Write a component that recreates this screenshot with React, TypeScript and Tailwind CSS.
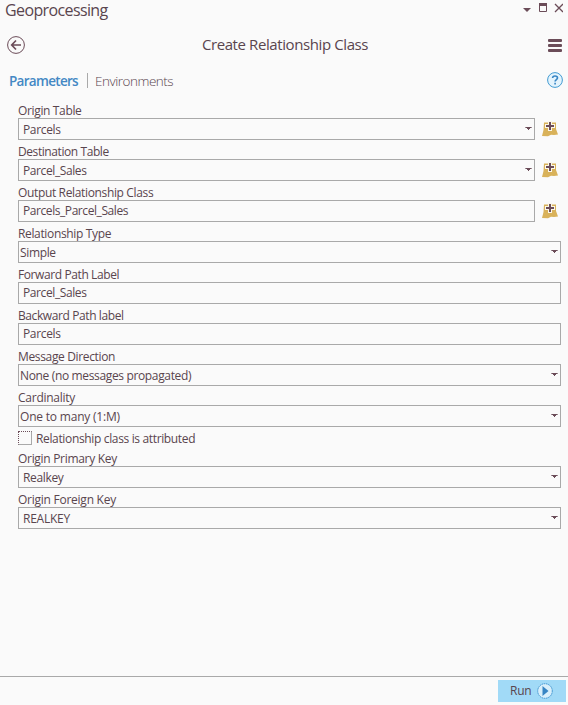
import React from "react";
import clsx from "clsx";

type FieldProps = {
  label: string;
  value: string;
  labelFit?: string;
  valueFit?: string;
  inset?: boolean;
  select?: boolean;
  browse?: boolean;
};

function Caret() {
  return (
    <svg width="7" height="4" viewBox="0 0 7 4" shapeRendering="crispEdges" className="mb-px shrink-0">
      <path d="M0 0h7v1H0z" fill="#9d8c93" />
      <path d="M1 0h5v1h-1v1h-1v1h-1v-1h-1v-1h-1z" fill="#6b4c58" />
    </svg>
  );
}

function BrowseIcon() {
  return (
    <svg width="16" height="16" viewBox="0 0 16 16" className="ml-[7px] shrink-0">
      <path d="M2 1.500h12V8l2 5.500-4 .5-3-.2L6 15.300l-6-.3L1.500 9z" fill="#d9b25a" />
      <path d="M6 0h4v3h3v4h-3v3H6V7H3V3h3z" fill="#fbf7e8" />
      <path d="M7 1h2v3h3v2H9v3H7V6H4V4h3z" fill="#6b4c58" />
    </svg>
  );
}

function Field({ label, value, labelFit, valueFit, inset = true, select, browse }: FieldProps) {
  return (
    <div className="h-[41px]">
      <div className="h-[15px] leading-[15px]">
        <span className={clsx("whitespace-nowrap", labelFit)}>{label}</span>
      </div>
      <div className="flex items-center">
        <div
          className={clsx(
            "flex h-[22px] items-center justify-between border border-[#a9a9a9] pr-[2px]",
            browse ? "w-[517px]" : "w-[543px]",
            inset ? "pl-1" : "pl-px",
          )}
        >
          <span className={clsx("whitespace-nowrap leading-[18px]", select && "pt-[2px]", valueFit)}>{value}</span>
          {select && <Caret />}
        </div>
        {browse && <BrowseIcon />}
      </div>
    </div>
  );
}

export default function App() {
  return (
    <div className="flex h-[705px] w-[568px] flex-col overflow-hidden bg-[#fafafa] font-['Open_Sans','Noto_Sans',sans-serif] text-[12px] tracking-[-0.35px] text-[#59454e]">
      <header className="flex h-[22px] items-start justify-between pl-[5px] pr-[5px]">
        <h1 className="text-[16px] leading-[21px] tracking-[-0.62px]">Geoprocessing</h1>
        <svg width="41" height="14" viewBox="522 0 41 14" fill="none">
          <path d="M523 8h8l-4 4z" fill="#6b4c58" />
          <path d="M539.500 4.500h7v7h-7z" stroke="#6b4c58" />
          <path d="M539 3h8v3h-8z" fill="#6b4c58" />
          <path d="m555 4 8 8m0-8-8 8" stroke="#6b4c58" strokeWidth="1.3" />
        </svg>
      </header>

      <div className="flex h-[46px] items-center justify-between pl-[7px] pr-[6px]">
        <svg width="18" height="18" viewBox="0 0 18 18" fill="none" stroke="#6b4c58">
          <circle cx="9" cy="9" r="8.4" strokeWidth="1" />
          <path d="M14 9H5M9 4.500 4.700 9 9 13.500" strokeWidth="1.7" />
        </svg>
        <h2 className="pb-[2px] pr-[3px] text-[15px] leading-[20px] tracking-[-0.4px]">Create Relationship Class</h2>
        <div className="flex w-[14px] flex-col gap-[2px]">
          <span className="h-[3px] rounded-[1px] bg-[#6b4c58]" />
          <span className="h-[3px] rounded-[1px] bg-[#6b4c58]" />
          <span className="h-[3px] rounded-[1px] bg-[#6b4c58]" />
        </div>
      </div>

      <nav className="flex h-[25px] items-center pl-[9px] pr-[5px] text-[13.5px]">
        <span className="w-[70px] pt-[2px] font-semibold tracking-[-0.7px] text-[#4388c4]">Parameters</span>
        <span className="mx-[8px] h-[15px] w-px bg-[#a9a9a9]" />
        <span className="-ml-px pt-[2px] font-light tracking-[-0.48px]">Environments</span>
        <svg width="16" height="16" viewBox="0 0 16 16" fill="none" className="-mt-px ml-auto">
          <circle cx="8" cy="8" r="7.4" fill="#e4f4fd" stroke="#429bd2" />
          <path d="M5.600 6.100C5.600 4.700 6.600 4 8 4s2.500.8 2.500 2c0 1.500-2.400 1.600-2.400 3.500M8.100 10.800v1.700" stroke="#3785c4" strokeWidth="1.6" />
        </svg>
      </nav>

      <main className="flex-1 pl-[18px] pt-[10px]">
        <Field label="Origin Table" value="Parcels" select browse />
        <Field label="Destination Table" labelFit="tracking-[-0.42px]" value="Parcel_Sales" valueFit="tracking-[-0.4px]" select browse />
        <Field label="Output Relationship Class" value="Parcels_Parcel_Sales" valueFit="tracking-[-0.43px]" browse />
        <Field label="Relationship Type" value="Simple" inset={false} select />
        <Field label="Forward Path Label" labelFit="tracking-[-0.4px]" value="Parcel_Sales" valueFit="tracking-[-0.4px]" />
        <Field label="Backward Path label" labelFit="tracking-[-0.4px]" value="Parcels" />
        <Field label="Message Direction" value="None (no messages propagated)" inset={false} select />
        <Field label="Cardinality" labelFit="tracking-[-0.25px]" value="One to many (1:M)" valueFit="tracking-[-0.2px]" inset={false} select />
        <div className="flex h-5 items-start gap-1">
          <span className="h-[14px] w-[14px] border border-[#a9a9a9] border-l-[#6b4c58] border-t-[#6b4c58] [border-left-style:dotted] [border-top-style:dotted]" />
          <span className="leading-[15px]">Relationship class is attributed</span>
        </div>
        <Field label="Origin Primary Key" labelFit="tracking-[-0.3px]" value="Realkey" select />
        <Field label="Origin Foreign Key" labelFit="tracking-[-0.25px]" value="REALKEY" valueFit="tracking-[-0.25px]" select />
      </main>

      <footer className="flex h-[29px] items-start justify-end border-t border-[#a9a9a9] pr-[2px] pt-[3px]">
        <button className="flex h-[22px] w-[68px] items-center justify-between bg-[#a1daf7] pl-[12px] pr-[13px] text-[12px]">
          <span className="tracking-[-0.25px]">Run</span>
          <svg width="16" height="16" viewBox="0 0 16 16">
            <circle cx="8" cy="8" r="7.3" fill="#d8effb" stroke="#3c92cf" strokeDasharray="1.5 .7" />
            <path d="m5.500 3 6 5-6 5z" fill="#3785c4" />
          </svg>
        </button>
      </footer>
    </div>
  );
}
